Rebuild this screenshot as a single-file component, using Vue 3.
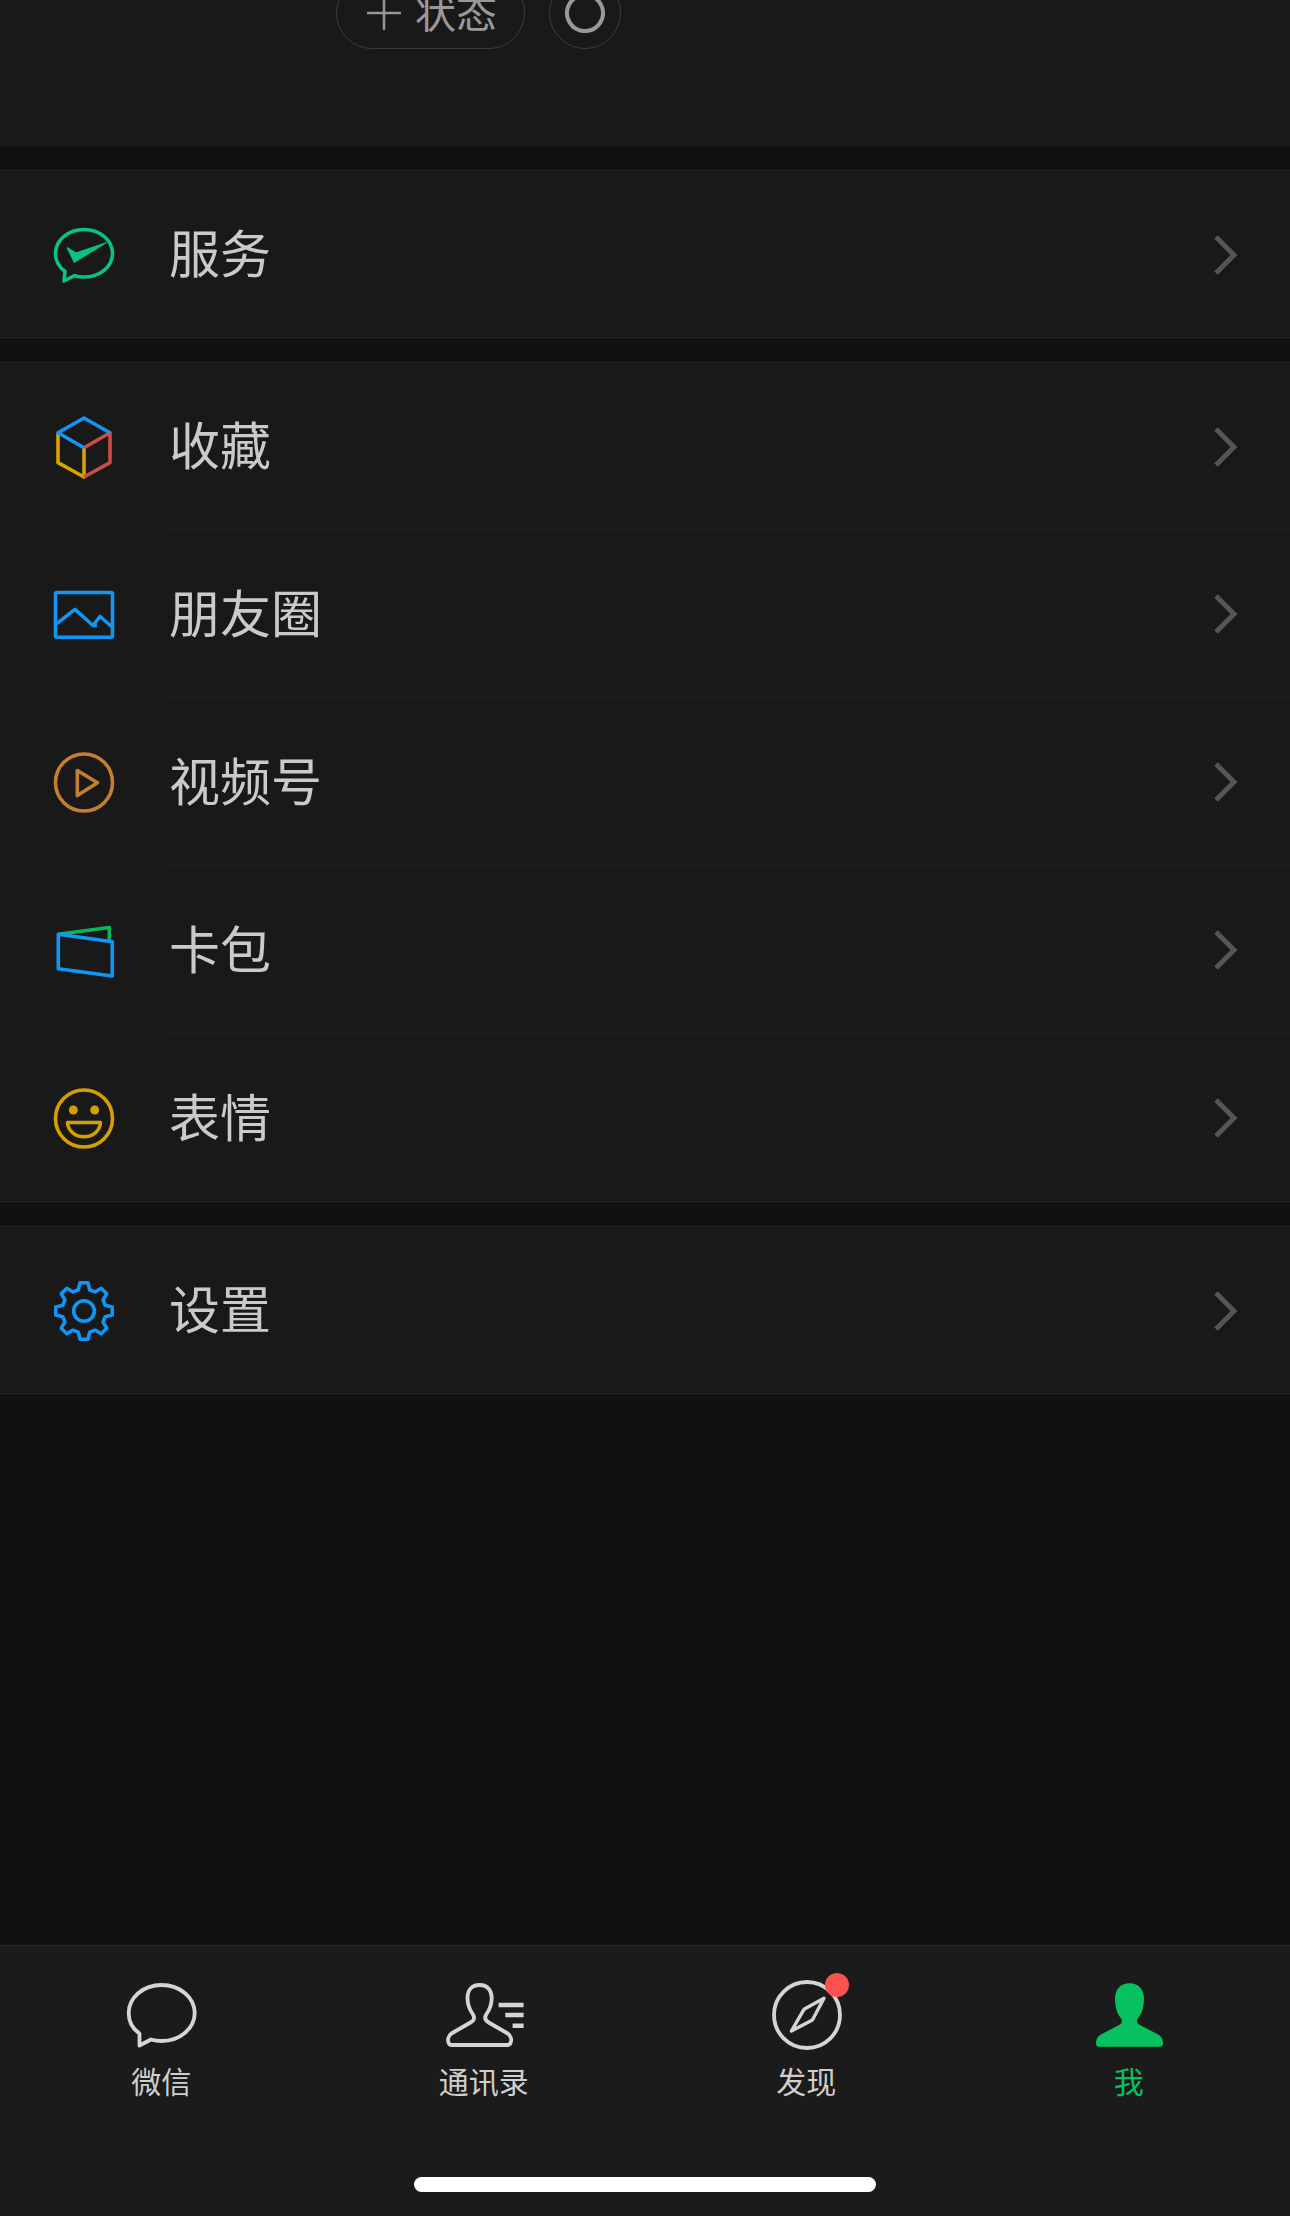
<template>
  <div class="page">
    <div class="profile">
      <div class="status-row">
        <div class="status-pill">
          <svg class="status-plus" width="34" height="34" viewBox="0 0 34 34">
            <path d="M0 17H34M17 0V34" stroke="#999" stroke-width="2.5" fill="none" />
          </svg>
          <span>状态</span>
        </div>
        <div class="status-circle">
          <svg width="40" height="40" viewBox="0 0 40 40">
            <path d="M24 2.500A18 18 0 1 1 17 2.300" stroke="#999" stroke-width="4" fill="none" />
          </svg>
        </div>
      </div>
    </div>

    <div v-for="(group, g) in groups" :key="g" class="group">
      <div v-for="item in group" :key="item.label" class="row">
        <svg class="row-icon" width="60" height="60" viewBox="0 0 60 60" fill="none" stroke-width="3.600" stroke-linejoin="round">
          <template v-if="item.icon === 'service'">
            <path d="M11 46.500C5 42 1.500 35.500 1.500 28.500C1.500 15 14.500 4.500 30 4.500S58.500 15 58.500 28.500S45.500 52 30 52C26.500 52 23.500 51.500 20.500 50.700L10 56Z" stroke="#07c57f" />
            <path d="M13.300 22.700L22 28L52 17.700L20.300 37.300Z" fill="#07c57f" stroke="#07c57f" stroke-width="1.200" />
          </template>
          <template v-else-if="item.icon === 'fav'">
            <path d="M4 15.700V45.700L30 60V30.700" stroke="#d9a200" />
            <path d="M30 30.700L56 15.700V45.700L30 60" stroke="#cc4b4b" />
            <path d="M30 30.700L4 15.700L30 1L56 15.700" stroke="#1296f5" />
          </template>
          <template v-else-if="item.icon === 'moments'">
            <rect x="1.500" y="8.500" width="57" height="44.700" rx="1.500" stroke="#1296f5" />
            <path d="M2.700 39.700L21 25.300L39 41.500H43M39 41.500L46 32.500L57.700 42.500" stroke="#1296f5" />
          </template>
          <template v-else-if="item.icon === 'video'">
            <circle cx="30" cy="30.500" r="28.500" stroke="#c47e2f" />
            <path d="M23.300 18.500L43.500 30.700L23.300 43.500Z" stroke="#c47e2f" />
          </template>
          <template v-else-if="item.icon === 'card'">
            <path d="M4.300 14.300L55.300 7.500V20.300" stroke="#07b859" />
            <path d="M4.300 14.300L58.300 21.700V56L4.300 48.700Z" stroke="#1296f5" />
          </template>
          <template v-else-if="item.icon === 'sticker'">
            <circle cx="30" cy="30.500" r="28.500" stroke="#d4a000" />
            <circle cx="19.300" cy="22" r="4.500" fill="#d4a000" />
            <circle cx="40.700" cy="22" r="4.500" fill="#d4a000" />
            <path d="M13.500 34.500H46.500C46 43 38.500 48.800 30 48.800S14 43 13.500 34.500Z" stroke="#d4a000" />
          </template>
          <template v-else>
            <path :d="gearPath" stroke="#1296f5" />
            <circle cx="30" cy="30" r="10.300" stroke="#1296f5" />
          </template>
        </svg>
        <span class="row-label">{{ item.label }}</span>
        <svg class="chevron" width="24" height="40" viewBox="0 0 24 40" fill="none">
          <path d="M3 2L21 20L3 38" stroke="#555" stroke-width="5" />
        </svg>
      </div>
    </div>

    <div class="spacer"></div>

    <div class="tabbar">
      <div class="tabs">
        <div v-for="tab in tabs" :key="tab.label" class="tab" :class="{ active: tab.active }">
          <div class="tab-icon">
            <svg width="80" height="70" viewBox="0 0 80 70" fill="none" stroke="#d5d5d5" stroke-width="3.800" stroke-linejoin="round">
              <path v-if="tab.icon === 'chat'" d="M18.500 53.500C10.500 48 7.700 41 7.700 33C7.700 17.500 22 5 40.700 5C59 5 73.700 17.500 73.700 33C73.700 48.500 59 61 40.700 61C36.500 61 33 60.500 30 59.500L18.500 65.500Z" />
              <template v-else-if="tab.icon === 'contacts'">
                <path d="M35.600 5C27.500 5 23.500 10.500 23.500 18C23.500 26 26.500 31 29 34.500C31 38 30 40.500 26.500 42.500L7.500 53.500C4 56 3.500 60 4.500 62.500C5 64.500 6.500 65 8 65H63.200C64.700 65 66.200 64.500 66.700 62.500C67.700 60 67.200 56 63.700 53.500L44.700 42.500C41.200 40.500 40.200 38 42.200 34.500C44.700 31 47.700 26 47.700 18C47.700 10.500 43.700 5 35.600 5Z" />
                <path d="M54.600 25H79.600M61.300 35H79.600M68.600 45.700H79.600" stroke-width="4.600" />
              </template>
              <template v-else-if="tab.icon === 'discover'">
                <circle cx="41" cy="35" r="33" />
                <path d="M58 18.300L38 29.300L25.400 51L46.400 40Z" stroke-width="3.400" />
              </template>
              <path v-else d="M40.500 3.300C31 3.300 26 10 26 19C26 28 29 35 32.500 39C33.500 41 33 43.500 30 45L11 55C8 57 7 60 7 63.500C7 65.500 8 66.700 10 66.700H71C73 66.700 74 65.500 74 63.500C74 60 73 57 70 55L51 45C48 43.500 47.500 41 48.500 39C52 35 55 28 55 19C55 10 50 3.300 40.500 3.300Z" fill="#07c160" stroke="none" />
            </svg>
            <span v-if="tab.dot" class="tab-dot"></span>
          </div>
          <span class="tab-label">{{ tab.label }}</span>
        </div>
      </div>
      <div class="home-bar"></div>
    </div>
  </div>
</template>

<script setup>
const groups = [
  [{ label: '服务', icon: 'service' }],
  [
    { label: '收藏', icon: 'fav' },
    { label: '朋友圈', icon: 'moments' },
    { label: '视频号', icon: 'video' },
    { label: '卡包', icon: 'card' },
    { label: '表情', icon: 'sticker' }
  ],
  [{ label: '设置', icon: 'settings' }]
]

const tabs = [
  { label: '微信', icon: 'chat' },
  { label: '通讯录', icon: 'contacts' },
  { label: '发现', icon: 'discover', dot: true },
  { label: '我', icon: 'me', active: true }
]

// 8 teeth, one pointing straight up
const gearPath = (() => {
  const pt = (r, deg) => {
    const a = (deg * Math.PI) / 180
    return `${(30 + r * Math.cos(a)).toFixed(2)} ${(30 + r * Math.sin(a)).toFixed(2)}`
  }
  const parts = []
  for (let i = 0; i < 8; i++) {
    const c = i * 45 - 90
    parts.push(pt(22, c - 15), pt(28.5, c - 8), pt(28.5, c + 8), pt(22, c + 15))
  }
  return 'M' + parts.join('L') + 'Z'
})()
</script>

<style>
html,
body {
  background: #111111;
}
</style>

<style scoped>
.page {
  width: 1290px;
  height: 2216px;
  display: flex;
  flex-direction: column;
  overflow: hidden;
  background: #111111;
  font-family: "Noto Sans CJK SC", "Noto Sans", sans-serif;
}

.profile {
  height: 147px;
  flex: none;
  background: #191919;
  margin-bottom: 23px;
}

.status-row {
  display: flex;
  gap: 24px;
  margin-left: 336px;
  transform: translateY(-23px);
}

.status-pill {
  width: 189px;
  height: 72px;
  box-sizing: border-box;
  border: 1.5px solid #3c3c3c;
  border-radius: 36px;
  display: flex;
  align-items: center;
  padding-left: 30px;
  gap: 14px;
  color: #999;
  font-size: 41px;
  line-height: 1;
}

.status-pill span {
  margin-bottom: 6px;
}

.status-circle {
  width: 72px;
  height: 72px;
  box-sizing: border-box;
  border: 1.5px solid #3c3c3c;
  border-radius: 50%;
  display: flex;
  align-items: center;
  justify-content: center;
}

.group {
  flex: none;
  background: #191919;
  border-top: 1px solid #252525;
  margin-bottom: 24px;
}

.row {
  position: relative;
  height: 168px;
  box-sizing: border-box;
  display: flex;
  align-items: center;
  padding-left: 54px;
  padding-right: 53px;
}

.row:first-child {
  height: 167px;
}

.row::after {
  content: "";
  position: absolute;
  left: 170px;
  right: 0;
  bottom: 0;
  height: 1px;
  background: #222222;
}

.row:last-child::after {
  left: 0;
  background: #252525;
}

.row-icon {
  flex: none;
  overflow: visible;
}

.row-label {
  margin-left: 55px;
  margin-bottom: 6px;
  flex: 1;
  font-size: 51px;
  line-height: 1;
  color: #cacaca;
}

.chevron {
  flex: none;
}

.spacer {
  flex: 1;
}

.tabbar {
  flex: none;
  height: 271px;
  box-sizing: border-box;
  background: #1b1b1b;
  border-top: 1px solid #2a2a2a;
  display: flex;
  flex-direction: column;
}

.tabs {
  display: grid;
  grid-template-columns: repeat(4, 1fr);
  padding-top: 34px;
}

.tab {
  display: flex;
  flex-direction: column;
  align-items: center;
  color: #cfcfcf;
}

.tab.active {
  color: #07c160;
}

.tab-icon {
  position: relative;
  width: 80px;
  height: 70px;
}

.tab-icon svg {
  display: block;
  overflow: visible;
}

.tab-dot {
  position: absolute;
  left: 59px;
  top: -7px;
  width: 24px;
  height: 24px;
  border-radius: 50%;
  background: #fa5151;
}

.tab-label {
  margin-top: 12px;
  font-size: 30px;
  line-height: 36px;
}

.home-bar {
  width: 462px;
  height: 15px;
  margin: auto auto 24px;
  border-radius: 8px;
  background: #ffffff;
}
</style>
